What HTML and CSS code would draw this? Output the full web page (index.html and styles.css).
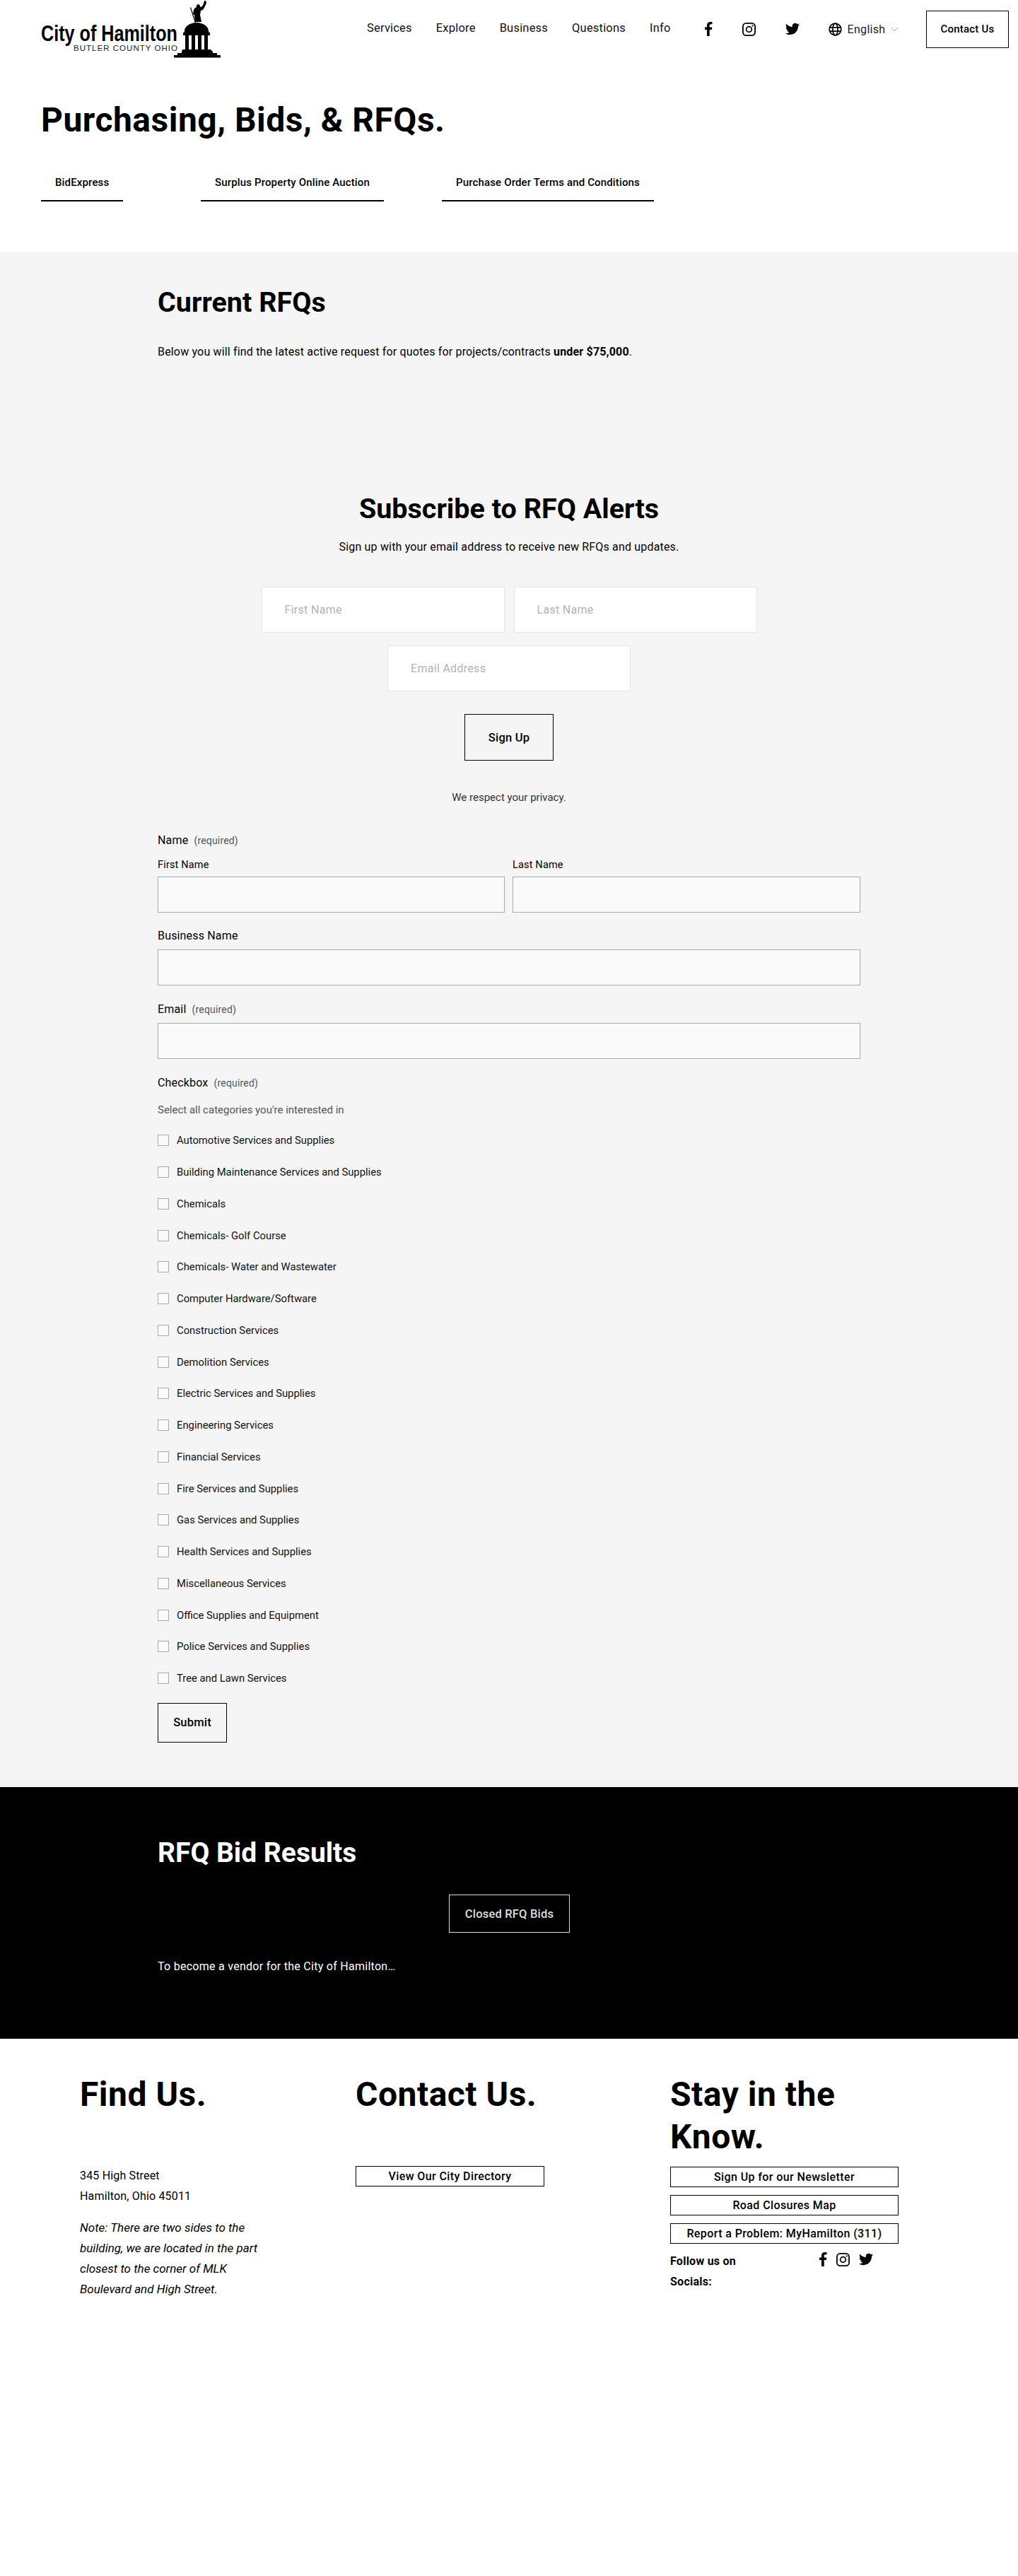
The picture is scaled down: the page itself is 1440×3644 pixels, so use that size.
FILE: index.html
```html
<!DOCTYPE html>
<html lang="en">
<head>
  <meta charset="UTF-8">
  <meta name="viewport" content="width=device-width,initial-scale=1">
  <title>Purchasing, Bids, &amp; RFQs – City of Hamilton</title>
  <link rel="stylesheet" href="styles.css">
</head>
<body>
  <svg class="sprite" aria-hidden="true">
    <symbol id="i-fb" viewBox="0 0 11 20">
      <path d="M3 20v-9H0V7.600h3V5c0-3.200 1.900-5 4.700-5 1.300 0 2.400.1 2.800.2v3.100H8.600C7.100 3.300 6.700 4 6.700 5.100v2.500h3.700l-.5 3.400H6.700v9z"/>
    </symbol>
    <symbol id="i-ig" viewBox="0 0 24 24">
      <path d="M7 0h10a7 7 0 0 1 7 7v10a7 7 0 0 1-7 7H7a7 7 0 0 1-7-7V7a7 7 0 0 1 7-7zm0 2.300A4.700 4.700 0 0 0 2.300 7v10A4.700 4.700 0 0 0 7 21.700h10a4.700 4.700 0 0 0 4.700-4.700V7A4.700 4.700 0 0 0 17 2.300z"/>
      <path d="M12 6a6 6 0 1 1 0 12 6 6 0 0 1 0-12zm0 2.200a3.800 3.800 0 1 0 0 7.600 3.800 3.800 0 0 0 0-7.600z"/>
      <circle cx="18.400" cy="5.600" r="1.400"/>
    </symbol>
    <symbol id="i-tw" viewBox="0 0 24 24">
      <path d="M23.953 4.57a10 10 0 01-2.825.775 4.958 4.958 0 002.163-2.723c-.951.555-2.005.959-3.127 1.184a4.92 4.92 0 00-8.384 4.482C7.690 8.095 4.067 6.130 1.640 3.162a4.822 4.822 0 00-.666 2.475c0 1.710.870 3.213 2.188 4.096a4.904 4.904 0 01-2.228-.616v.060a4.923 4.923 0 003.946 4.827 4.996 4.996 0 01-2.212.085 4.936 4.936 0 004.604 3.417 9.867 9.867 0 01-6.102 2.105c-.390 0-.779-.023-1.170-.067a13.995 13.995 0 007.557 2.209c9.053 0 13.998-7.496 13.998-13.985 0-.210 0-.420-.015-.630A9.935 9.935 0 0024 4.590z"/>
    </symbol>
  </svg>

  <header class="site-header">
    <a class="logo" href="#">
      <svg viewBox="0 0 255 82" width="255" height="82">
        <text class="logo-name" x="0" y="58" textLength="193" lengthAdjust="spacingAndGlyphs">City of Hamilton</text>
        <text class="logo-county" x="46" y="71.500" textLength="147" lengthAdjust="spacing">BUTLER COUNTY OHIO</text>
        <!-- statue -->
        <path d="M218 31l-1-10-2-1 1-6 2-3 2-1 0-3 3-1 2 2 0 2 3-1 2-4 1-4 2 0 1 3-2 5-3 5-3 1-1 6 1 5 1 5z"/>
        <path d="M211 11l1-1 7 22-1 1z"/>
        <!-- dome and columns -->
        <path d="M203 44c0-7 8-12 17-12s17 5 17 12l1 3h-36z"/>
        <path d="M204 48h5v23h-5zM213 48h5v23h-5zM222 48h5v23h-5zM231 48h5v23h-5z"/>
        <path d="M201 46h38v4h-38z"/>
        <path d="M200 70h40l3 3v2h6v3h5v3.500h-66V78h5v-3h6v-2z"/>
      </svg>
    </a>
    <nav class="main-nav">
      <a href="#">Services</a>
      <a href="#">Explore</a>
      <a href="#">Business</a>
      <a href="#">Questions</a>
      <a href="#">Info</a>
    </nav>
    <div class="header-socials">
      <a href="#" class="soc-fb"><svg><use href="#i-fb"/></svg></a>
      <a href="#" class="soc-ig"><svg><use href="#i-ig"/></svg></a>
      <a href="#" class="soc-tw"><svg><use href="#i-tw"/></svg></a>
    </div>
    <div class="lang">
      <svg viewBox="0 0 20 20" width="19" height="19" fill="none" stroke="#000" stroke-width="1.800">
        <circle cx="10" cy="10" r="8.800"/>
        <ellipse cx="10" cy="10" rx="3.800" ry="8.800"/>
        <path d="M1.500 7.200h17M1.500 12.800h17"/>
      </svg>
      <span>English</span>
      <svg viewBox="0 0 12 8" width="11" height="7" fill="none" stroke="#999" stroke-width="1"><path d="M1 1l5 5.500L11 1"/></svg>
    </div>
    <a class="btn btn-contact" href="#">Contact Us</a>
  </header>

  <section class="hero">
    <h1>Purchasing, Bids, &amp; RFQs.</h1>
    <div class="tabs">
      <a href="#">BidExpress</a>
      <a href="#">Surplus Property Online Auction</a>
      <a href="#">Purchase Order Terms and Conditions</a>
    </div>
  </section>

  <section class="gray">
    <div class="wrap">
      <h2>Current RFQs</h2>
      <p class="lead">Below you will find the latest active request for quotes for projects/contracts <strong>under $75,000</strong>.</p>
    </div>

    <div class="newsletter">
      <h2>Subscribe to RFQ Alerts</h2>
      <p class="news-sub">Sign up with your email address to receive new RFQs and updates.</p>
      <div class="news-row">
        <input class="news-input" type="text" placeholder="First Name">
        <input class="news-input" type="text" placeholder="Last Name">
      </div>
      <div class="news-row">
        <input class="news-input" type="email" placeholder="Email Address">
      </div>
      <a class="btn btn-signup" href="#">Sign Up</a>
      <p class="privacy">We respect your privacy.</p>
    </div>

    <form class="wrap rfq-form">
      <div class="legend">Name <small>(required)</small></div>
      <div class="name-row">
        <label>First Name<input type="text"></label>
        <label>Last Name<input type="text"></label>
      </div>
      <label class="legend field">Business Name<input type="text"></label>
      <label class="legend field">
        <span>Email <small>(required)</small></span>
        <input type="email">
      </label>
      <div class="legend check-legend">Checkbox <small>(required)</small></div>
      <p class="hint">Select all categories you're interested in</p>
      <div class="checks">
        <label><input type="checkbox">Automotive Services and Supplies</label>
        <label><input type="checkbox">Building Maintenance Services and Supplies</label>
        <label><input type="checkbox">Chemicals</label>
        <label><input type="checkbox">Chemicals- Golf Course</label>
        <label><input type="checkbox">Chemicals- Water and Wastewater</label>
        <label><input type="checkbox">Computer Hardware/Software</label>
        <label><input type="checkbox">Construction Services</label>
        <label><input type="checkbox">Demolition Services</label>
        <label><input type="checkbox">Electric Services and Supplies</label>
        <label><input type="checkbox">Engineering Services</label>
        <label><input type="checkbox">Financial Services</label>
        <label><input type="checkbox">Fire Services and Supplies</label>
        <label><input type="checkbox">Gas Services and Supplies</label>
        <label><input type="checkbox">Health Services and Supplies</label>
        <label><input type="checkbox">Miscellaneous Services</label>
        <label><input type="checkbox">Office Supplies and Equipment</label>
        <label><input type="checkbox">Police Services and Supplies</label>
        <label><input type="checkbox">Tree and Lawn Services</label>
      </div>
      <button class="btn btn-submit" type="button">Submit</button>
    </form>
  </section>

  <section class="black">
    <div class="wrap">
      <h2>RFQ Bid Results</h2>
      <div class="closed-row"><a class="btn btn-closed" href="#">Closed RFQ Bids</a></div>
      <p>To become a vendor for the City of Hamilton…</p>
    </div>
  </section>

  <footer class="site-footer">
    <div class="foot-col foot-find">
      <h3>Find Us.</h3>
      <p>345 High Street<br>Hamilton, Ohio 45011</p>
      <p class="note">Note: There are two sides to the building, we are located in the part closest to the corner of MLK Boulevard and High Street.</p>
    </div>
    <div class="foot-col foot-contact">
      <h3>Contact Us.</h3>
      <a class="foot-btn" href="#">View Our City Directory</a>
    </div>
    <div class="foot-col foot-stay">
      <h3>Stay in the Know.</h3>
      <a class="foot-btn" href="#">Sign Up for our Newsletter</a>
      <a class="foot-btn" href="#">Road Closures Map</a>
      <a class="foot-btn" href="#">Report a Problem: MyHamilton (311)</a>
      <div class="follow">
        <strong>Follow us on Socials:</strong>
        <div class="foot-socials">
          <a href="#" class="soc-fb"><svg><use href="#i-fb"/></svg></a>
          <a href="#" class="soc-ig"><svg><use href="#i-ig"/></svg></a>
          <a href="#" class="soc-tw"><svg><use href="#i-tw"/></svg></a>
        </div>
      </div>
    </div>
  </footer>
</body>
</html>
```

FILE: styles.css
```css
* { box-sizing: border-box; }
body {
  margin: 0;
  min-height: 3644px;
  background: #fff;
  color: #000;
  font-family: Roboto, "Liberation Sans", sans-serif;
  font-size: 16px;
  letter-spacing: .17px;
}
a { color: inherit; text-decoration: none; }
h1, h2, h3, p { margin: 0; }
.sprite { display: none; }

/* header */
.site-header {
  display: flex; align-items: center;
  height: 82px;
  padding: 0 13px 0 58px;
}
.logo { display: block; height: 82px; width: 255px; }
.logo-name { font-family: "Liberation Sans", sans-serif; font-weight: 700; font-size: 31px; letter-spacing: 0; }
.logo-county { font-family: "Liberation Sans", sans-serif; font-size: 11.500px; fill: #222; letter-spacing: 0; }
.main-nav { display: flex; gap: 34px; margin-left: 206px; margin-top: -2px; font-size: 16.500px; line-height: 20px; letter-spacing: .2px; color: #111; }
.header-socials { display: flex; align-items: center; gap: 42px; margin-left: 48px; }
.header-socials a, .foot-socials a { display: block; }
.header-socials svg, .foot-socials svg { display: block; }
.soc-fb svg { width: 11px; height: 20px; }
.soc-ig svg { width: 19px; height: 19px; }
.soc-tw svg { width: 20px; height: 20px; }
.lang { display: flex; align-items: center; gap: 8px; margin-left: 41px; font-size: 16px; letter-spacing: .3px; }
.lang span { color: #222; }
.btn {
  display: flex; align-items: center; justify-content: center;
  border: 1px solid #000;
  background: transparent;
  color: #000;
  font-family: inherit;
  font-weight: 500;
  letter-spacing: .2px;
}
.btn-contact { width: 117px; height: 53px; margin-left: auto; font-size: 15px; }

/* hero */
.hero { height: 275px; padding: 58px 58px 0; }
.hero h1 { font-size: 48px; line-height: 60px; font-weight: 700; letter-spacing: .5px; }
.tabs { display: grid; grid-template-columns: 226px 341px auto; justify-items: start; margin-top: 48px; }
.tabs a { display: block; padding: 0 20px 15px; border-bottom: 2px solid #000; font-size: 15px; font-weight: 500; line-height: 20px; letter-spacing: .15px; }

/* grey band */
.gray { background: #f5f5f5; height: 2171px; padding-top: 46px; }
.wrap { width: 994px; margin: 0 auto; }
.gray h2 { font-size: 39.500px; line-height: 50px; font-weight: 700; letter-spacing: 0; }
.lead { margin-top: 32px; line-height: 26px; }
.newsletter { margin-top: 184px; text-align: center; }
.news-sub { margin-top: 16px; line-height: 26px; }
.news-row { display: flex; justify-content: center; gap: 13px; margin-bottom: 18px; }
.news-sub + .news-row { margin-top: 43px; }
.news-input {
  width: 344px; height: 65px;
  padding: 0 32px;
  background: #fff;
  border: 1px solid #e6e6e6;
  font: inherit;
  letter-spacing: .3px;
}
.news-input::placeholder { color: #b3b3b3; }
.btn-signup { width: 126px; height: 66px; margin: 32px auto 0; font-size: 16.500px; }
.privacy { margin-top: 42px; font-size: 15px; line-height: 20px; color: #333; letter-spacing: 0; }

/* rfq form */
.rfq-form { margin-top: 41px; }
.legend { display: block; line-height: 20px; font-size: 16px; }
.legend small { margin-left: 4px; font-size: 14px; color: #555; }
.name-row { display: grid; grid-template-columns: 491px 492px; gap: 11px; margin-top: 15px; }
.name-row label { display: block; font-size: 14.500px; line-height: 20px; }
.rfq-form input[type=text], .rfq-form input[type=email] {
  display: block; width: 100%; height: 51px;
  margin-top: 6px;
  background: #fafafa;
  border: 1px solid #a9a9a9;
  outline: none;
}
.field { margin-top: 23px; }
.field + .field { margin-top: 24px; }
.field input[type=text], .field input[type=email] { margin-top: 9px; }
.check-legend { margin-top: 24px; }
.hint { margin-top: 18px; font-size: 15px; line-height: 20px; color: #555; letter-spacing: 0; }
.checks { margin-top: 11px; }
.checks label { display: flex; align-items: center; height: 44.750px; font-size: 14.800px; color: #111; letter-spacing: 0; }
.checks input {
  appearance: none;
  width: 16px; height: 16px;
  margin: 0 11px 0 0;
  background: #fafafa;
  border: 1px solid #a9a9a9;
}
.btn-submit { width: 98px; height: 56px; margin-top: 12px; font-size: 16.500px; }

/* black band */
.black { background: #000; color: #fff; height: 356px; padding-top: 66px; }
.black h2 { font-size: 39px; line-height: 54px; font-weight: 700; letter-spacing: 0; }
.closed-row { display: flex; margin-top: 32px; padding-left: 412px; }
.btn-closed { width: 171px; height: 54px; border-color: #ddd; color: #ddd; font-size: 16.500px; }
.black p { margin-top: 36px; line-height: 24px; color: #fff; letter-spacing: .27px; }

/* footer */
.site-footer { display: flex; padding: 49px 0 0 113px; }
.foot-col h3 { font-size: 48px; line-height: 60px; font-weight: 700; letter-spacing: .5px; }
.foot-find { width: 390px; }
.foot-find p { width: 265px; line-height: 29px; }
.foot-find h3 { margin-bottom: 70px; }
.foot-find .note { margin-top: 16px; font-style: italic; font-size: 17px; letter-spacing: 0; }
.foot-contact { width: 445px; }
.foot-contact h3 { margin-bottom: 71px; }
.foot-contact .foot-btn { width: 267px; }
.foot-stay { width: 323px; }
.foot-stay h3 { margin-bottom: 12px; }
.foot-btn {
  display: flex; align-items: center; justify-content: center;
  height: 29px;
  margin-bottom: 11px;
  border: 1px solid #000;
  font-weight: 500;
  letter-spacing: .4px;
}
.follow { display: flex; justify-content: space-between; margin-top: -1px; }
.follow strong { width: 130px; line-height: 29px; letter-spacing: .25px; }
.foot-socials { display: flex; gap: 13px; align-items: center; height: 24px; margin-right: 36px; }
```
